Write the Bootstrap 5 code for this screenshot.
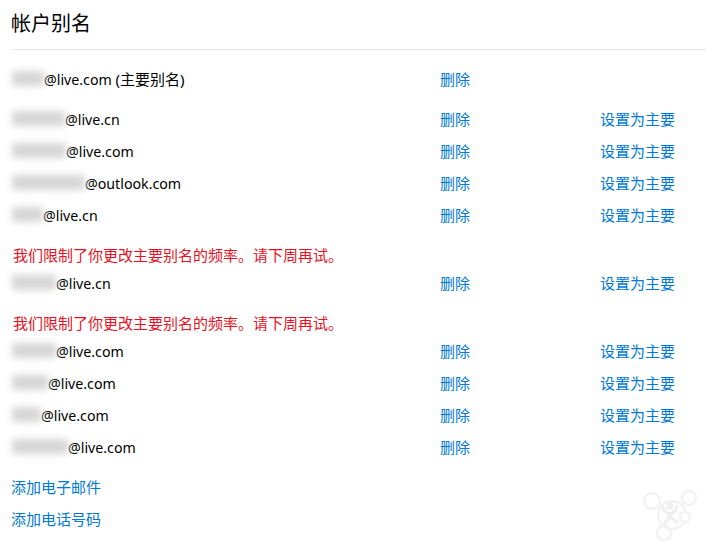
<!DOCTYPE html>
<html lang="zh-CN">
<head>
<meta charset="utf-8">
<title>帐户别名</title>
<link href="https://cdn.jsdelivr.net/npm/bootstrap@5.3.0/dist/css/bootstrap.min.css" rel="stylesheet">
<style>
html,body{height:100%;overflow:hidden}
body{font-family:"Noto Sans","Noto Sans CJK SC",sans-serif;font-size:15px;color:#000;background:#fff;position:relative}
.page-wrap{padding-left:12px}
.page-title{font-size:20px;font-weight:400;line-height:28px;padding-top:10px;padding-bottom:11px;margin:0 0 13px -1px;border-bottom:1px solid #e6e6e6}
.alias-row{height:32px;align-items:center}
.alias-first{margin-bottom:8px}
.alias-name{width:428px;display:flex;align-items:center;white-space:pre}
.addr{font-size:14.2px;padding-top:2px}
.alias-del{width:160px}
a.ms-link{color:#0078d7;text-decoration:none}
.limit-msg{color:#e81123;height:24px;line-height:24px;margin-top:12px;margin-left:1px}
.add-links{margin-top:8px;margin-left:-1px}
.add-links div{height:32px;line-height:32px}
.mask{display:inline-block;height:15px;background:#d6d6d6;filter:blur(3.5px);flex:none}
.w32{width:32px}.w53{width:53px}.w54{width:54px}.w73{width:73px}.w31{width:31px}.w44{width:44px}.w36{width:36px}.w29{width:29px}.w56{width:56px}
.wmark{position:absolute;right:0;bottom:0;width:86px;height:80px;filter:blur(.7px)}
</style>
</head>
<body>
<div class="page-wrap">
  <h1 class="page-title">帐户别名</h1>

  <div class="d-flex alias-row alias-first"><div class="alias-name"><span class="mask w32"></span><span class="addr">@live.com </span><span>(主要别名)</span></div><div class="alias-del"><a class="ms-link" href="#">删除</a></div></div>

  <div class="d-flex alias-row"><div class="alias-name"><span class="mask w53"></span><span class="addr">@live.cn</span></div><div class="alias-del"><a class="ms-link" href="#">删除</a></div><a class="ms-link" href="#">设置为主要</a></div>
  <div class="d-flex alias-row"><div class="alias-name"><span class="mask w54"></span><span class="addr">@live.com</span></div><div class="alias-del"><a class="ms-link" href="#">删除</a></div><a class="ms-link" href="#">设置为主要</a></div>
  <div class="d-flex alias-row"><div class="alias-name"><span class="mask w73"></span><span class="addr">@outlook.com</span></div><div class="alias-del"><a class="ms-link" href="#">删除</a></div><a class="ms-link" href="#">设置为主要</a></div>
  <div class="d-flex alias-row"><div class="alias-name"><span class="mask w31"></span><span class="addr">@live.cn</span></div><div class="alias-del"><a class="ms-link" href="#">删除</a></div><a class="ms-link" href="#">设置为主要</a></div>

  <div class="limit-msg">我们限制了你更改主要别名的频率。请下周再试。</div>
  <div class="d-flex alias-row"><div class="alias-name"><span class="mask w44"></span><span class="addr">@live.cn</span></div><div class="alias-del"><a class="ms-link" href="#">删除</a></div><a class="ms-link" href="#">设置为主要</a></div>

  <div class="limit-msg">我们限制了你更改主要别名的频率。请下周再试。</div>
  <div class="d-flex alias-row"><div class="alias-name"><span class="mask w44"></span><span class="addr">@live.com</span></div><div class="alias-del"><a class="ms-link" href="#">删除</a></div><a class="ms-link" href="#">设置为主要</a></div>
  <div class="d-flex alias-row"><div class="alias-name"><span class="mask w36"></span><span class="addr">@live.com</span></div><div class="alias-del"><a class="ms-link" href="#">删除</a></div><a class="ms-link" href="#">设置为主要</a></div>
  <div class="d-flex alias-row"><div class="alias-name"><span class="mask w29"></span><span class="addr">@live.com</span></div><div class="alias-del"><a class="ms-link" href="#">删除</a></div><a class="ms-link" href="#">设置为主要</a></div>
  <div class="d-flex alias-row"><div class="alias-name"><span class="mask w56"></span><span class="addr">@live.com</span></div><div class="alias-del"><a class="ms-link" href="#">删除</a></div><a class="ms-link" href="#">设置为主要</a></div>

  <div class="add-links">
    <div><a class="ms-link" href="#">添加电子邮件</a></div>
    <div><a class="ms-link" href="#">添加电话号码</a></div>
  </div>
</div>
<svg class="wmark" viewBox="0 0 86 80" fill="none" stroke="#f2f2f2" stroke-width="2.5">
  <circle cx="32" cy="31" r="8"/>
  <circle cx="69" cy="28" r="7"/>
  <circle cx="52" cy="45" r="14"/>
  <circle cx="44" cy="63" r="7"/>
  <circle cx="65" cy="47" r="5" fill="#fff"/>
  <circle cx="50" cy="36" r="3.5" fill="#efefef" stroke="none"/>
  <path d="M43 37q1 5 7 7 6-2 7-7M50 44q-1 5-5 9M50 44q1 5 7 8" stroke="#efefef" stroke-width="3.5" stroke-linecap="round"/>
</svg>
</body>
</html>
